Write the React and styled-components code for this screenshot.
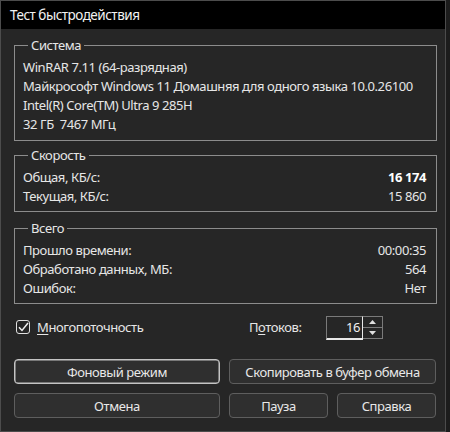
import styled, { createGlobalStyle } from "styled-components";

const GlobalStyle = createGlobalStyle`
  html, body {
    margin: 0;
    padding: 0;
    background: #1c1c1c;
  }
  body {
    font-family: "Noto Sans", "Liberation Sans", sans-serif;
    font-size: 13px;
    letter-spacing: -0.42px;
    color: #e6e6e6;
  }
`;

const Window = styled.div`
  width: 444px;
  height: 430px;
  border: 1px solid #4c4c4c;
  background: #262626;
  display: flex;
  flex-direction: column;
`;

const TitleBar = styled.div`
  height: 28px;
  background: #000;
  color: #f2f2f2;
  font-size: 13.5px;
  letter-spacing: -0.5px;
  line-height: 28px;
  padding-left: 9px;
`;

const Body = styled.div`
  padding: 7px 8px 0 13px;
  display: flex;
  flex-direction: column;
`;

const Group = styled.fieldset`
  margin: ${(p) => p.$gap || 0}px 0 0 0;
  padding: 3px 10px ${(p) => p.$pb || 5}px 8px;
  border: 1px solid #8c8c8c;
  min-width: 0;
`;

const Legend = styled.legend`
  padding: 0 3px;
  margin-left: 5px;
  line-height: 19px;
  color: #e6e6e6;
`;

const Line = styled.div`
  line-height: 19px;
  white-space: nowrap;
`;

const Row = styled.div`
  display: flex;
  justify-content: space-between;
  line-height: 19px;
`;

const Value = styled.span`
  font-weight: ${(p) => (p.$bold ? 700 : 400)};
  color: ${(p) => (p.$bold ? "#ffffff" : "#e6e6e6")};
`;

const OptionsRow = styled.div`
  display: flex;
  align-items: center;
  height: 24px;
  margin-top: 11px;
  padding-left: 2px;
`;

const CheckLabel = styled.label`
  display: flex;
  align-items: center;
  gap: 7px;
  width: 233px;
`;

const Box = styled.span`
  width: 12px;
  height: 12px;
  border: 1.5px solid #e0e0e0;
  border-radius: 3px;
  display: flex;
  align-items: center;
  justify-content: center;
`;

const Key = styled.span`
  text-decoration: underline;
  text-underline-offset: 2px;
`;

const ThreadsLabel = styled.span`
  width: 77px;
`;

const Spin = styled.div`
  display: flex;
  height: 23px;
`;

const SpinInput = styled.div`
  width: 33px;
  height: 21px;
  border-top: 1px solid #7a7a7a;
  border-left: 1px solid #7a7a7a;
  border-bottom: 2px solid #e8e8e8;
  border-right: 1px solid #e8e8e8;
  text-align: right;
  padding-right: 2px;
  line-height: 21px;
  color: #f0f0f0;
`;

const SpinButtons = styled.div`
  display: flex;
  flex-direction: column;
  width: 19px;
  border: 1px solid #7a7a7a;
  border-left: none;
`;

const SpinButton = styled.div`
  flex: 1;
  display: flex;
  align-items: center;
  justify-content: center;
  border-top: ${(p) => (p.$bottom ? "1px solid #7a7a7a" : "none")};
`;

const ButtonGrid = styled.div`
  display: grid;
  grid-template-columns: 206px 99px 99px;
  column-gap: 9px;
  row-gap: 9px;
  margin-top: 20px;
`;

const Button = styled.button`
  grid-column: span ${(p) => p.$span || 1};
  height: 25px;
  background: #2f2f2f;
  border: 1px solid ${(p) => (p.$focus ? "#c4c4c4" : "#5e5e5e")};
  box-shadow: ${(p) => (p.$focus ? "inset 0 0 0 0.5px #c4c4c4" : "none")};
  border-radius: 4px;
  color: #e8e8e8;
  font-family: inherit;
  font-size: 13px;
  letter-spacing: -0.42px;
  padding: 0;
`;

const Arrow = ({ down }) => (
  <svg width="7" height="4" viewBox="0 0 7 4">
    <path d={down ? "M0 0h7L3.5 4z" : "M0 4h7L3.5 0z"} fill="#e0e0e0" />
  </svg>
);

const App = () => (
  <>
    <GlobalStyle />
    <Window>
      <TitleBar>Тест быстродействия</TitleBar>
      <Body>
        <Group $pb={6}>
          <Legend>Система</Legend>
          <Line>WinRAR 7.11 (64-разрядная)</Line>
          <Line>Майкрософт Windows 11 Домашняя для одного языка 10.0.26100</Line>
          <Line>Intel(R) Core(TM) Ultra 9 285H</Line>
          <Line>32 ГБ&nbsp; 7467 МГц</Line>
        </Group>
        <Group $gap={5}>
          <Legend>Скорость</Legend>
          <Row>
            <span>Общая, КБ/с:</span>
            <Value $bold>16 174</Value>
          </Row>
          <Row>
            <span>Текущая, КБ/с:</span>
            <Value>15 860</Value>
          </Row>
        </Group>
        <Group $gap={7}>
          <Legend>Всего</Legend>
          <Row>
            <span>Прошло времени:</span>
            <Value>00:00:35</Value>
          </Row>
          <Row>
            <span>Обработано данных, МБ:</span>
            <Value>564</Value>
          </Row>
          <Row>
            <span>Ошибок:</span>
            <Value>Нет</Value>
          </Row>
        </Group>
        <OptionsRow>
          <CheckLabel>
            <Box>
              <svg width="11" height="10" viewBox="0 0 11 10">
                <path
                  d="M1 5.2l3 3.2L10 1"
                  fill="none"
                  stroke="#f0f0f0"
                  strokeWidth="1.5"
                />
              </svg>
            </Box>
            <span>
              <Key>М</Key>ногопоточность
            </span>
          </CheckLabel>
          <ThreadsLabel>
            П<Key>о</Key>токов:
          </ThreadsLabel>
          <Spin>
            <SpinInput>16</SpinInput>
            <SpinButtons>
              <SpinButton>
                <Arrow />
              </SpinButton>
              <SpinButton $bottom>
                <Arrow down />
              </SpinButton>
            </SpinButtons>
          </Spin>
        </OptionsRow>
        <ButtonGrid>
          <Button $focus>Фоновый режим</Button>
          <Button $span={2}>Скопировать в буфер обмена</Button>
          <Button>Отмена</Button>
          <Button>Пауза</Button>
          <Button>Справка</Button>
        </ButtonGrid>
      </Body>
    </Window>
  </>
);

export default App;
